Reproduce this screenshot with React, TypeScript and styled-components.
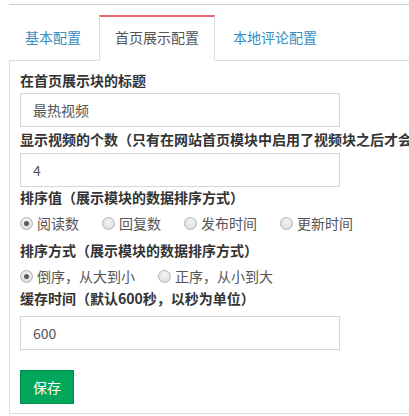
import { useState } from "react";
import styled, { createGlobalStyle } from "styled-components";

const GlobalStyle = createGlobalStyle`
  html, body {
    margin: 0;
    padding: 0;
    background: #fff;
    overflow: hidden;
  }
  body {
    font-family: "Noto Sans CJK SC", "Liberation Sans", sans-serif;
    font-size: 14px;
    color: #333;
  }
`;

const Wrapper = styled.div`
  margin: 4px 0 0 9px;
  padding-top: 10px;
  border-top: 1px solid #cccccc;
  width: 440px;
`;

const TabList = styled.ul`
  display: flex;
  margin: 0;
  padding: 0;
  list-style: none;
  border-bottom: 1px solid #dddddd;
`;

const Tab = styled.li<{ $active?: boolean }>`
  margin-right: 2px;
  margin-bottom: -1px;
  padding: 0 15px;
  height: 43px;
  line-height: 40px;
  border: 1px solid transparent;
  border-top: 2px solid transparent;
  color: #3c8dbc;
  cursor: pointer;
  white-space: nowrap;

  ${({ $active }) =>
    $active &&
    `
    color: #555;
    background: #fff;
    border-color: #dddddd;
    border-top-color: #e9686e;
    border-bottom-color: #fff;
  `}
`;

const Panel = styled.div`
  border-left: 1px solid #dddddd;
  border-bottom: 1px solid #dddddd;
  padding: 9px 10px 9px;
`;

const Label = styled.div<{ $mt?: number }>`
  margin-top: ${({ $mt }) => $mt ?? 0}px;
  line-height: 20px;
  font-weight: bold;
  color: #333;
  white-space: nowrap;
`;

const Input = styled.input<{ $mt?: number }>`
  display: block;
  box-sizing: border-box;
  margin-top: ${({ $mt }) => $mt ?? 0}px;
  width: 320px;
  height: 34px;
  padding: 0 12px;
  border: 1px solid #d2d6de;
  border-radius: 0;
  font-family: inherit;
  font-size: 14px;
  color: #555;
  outline: none;
`;

const RadioRow = styled.div<{ $mt?: number }>`
  display: flex;
  align-items: center;
  margin-top: ${({ $mt }) => $mt ?? 0}px;
  height: 20px;
`;

const RadioOption = styled.label`
  display: flex;
  align-items: center;
  gap: 4px;
  margin-right: 23px;
  color: #555;
  cursor: pointer;
  white-space: nowrap;
`;

const RadioDot = styled.span<{ $checked?: boolean }>`
  position: relative;
  display: inline-block;
  box-sizing: border-box;
  width: 13px;
  height: 13px;
  border-radius: 50%;
  border: 1px solid #b4b4b4;
  background: radial-gradient(circle at 50% 35%, #f4f4f4 0%, #d8d8d8 100%);

  &::after {
    content: "";
    display: ${({ $checked }) => ($checked ? "block" : "none")};
    position: absolute;
    left: 3px;
    top: 3px;
    width: 5px;
    height: 5px;
    border-radius: 50%;
    background: #5a5a5a;
  }
`;

const SaveButton = styled.button`
  display: block;
  margin-top: 20px;
  height: 34px;
  padding: 0 12px;
  border: 1px solid #008d4c;
  background: #00a65a;
  color: #fff;
  font-family: inherit;
  font-size: 14px;
  cursor: pointer;
`;

function RadioGroup({
  options,
  value,
  onChange,
  mt,
}: {
  options: string[];
  value: string;
  onChange: (v: string) => void;
  mt?: number;
}) {
  return (
    <RadioRow $mt={mt}>
      {options.map((opt) => (
        <RadioOption key={opt} onClick={() => onChange(opt)}>
          <RadioDot $checked={value === opt} />
          {opt}
        </RadioOption>
      ))}
    </RadioRow>
  );
}

export default function App() {
  const [tab, setTab] = useState("首页展示配置");
  const [title, setTitle] = useState("最热视频");
  const [count, setCount] = useState("4");
  const [sortBy, setSortBy] = useState("阅读数");
  const [order, setOrder] = useState("倒序，从大到小");
  const [cache, setCache] = useState("600");

  const tabs = ["基本配置", "首页展示配置", "本地评论配置"];

  return (
    <>
      <GlobalStyle />
      <Wrapper>
        <TabList>
          {tabs.map((t) => (
            <Tab key={t} $active={tab === t} onClick={() => setTab(t)}>
              {t}
            </Tab>
          ))}
        </TabList>
        <Panel>
          <Label>在首页展示块的标题</Label>
          <Input $mt={3} value={title} onChange={(e) => setTitle(e.target.value)} />

          <Label $mt={2}>
            显示视频的个数（只有在网站首页模块中启用了视频块之后才会生效）
          </Label>
          <Input $mt={4} value={count} onChange={(e) => setCount(e.target.value)} />

          <Label>排序值（展示模块的数据排序方式）</Label>
          <RadioGroup
            mt={6}
            options={["阅读数", "回复数", "发布时间", "更新时间"]}
            value={sortBy}
            onChange={setSortBy}
          />

          <Label $mt={7}>排序方式（展示模块的数据排序方式）</Label>
          <RadioGroup
            mt={6}
            options={["倒序，从大到小", "正序，从小到大"]}
            value={order}
            onChange={setOrder}
          />

          <Label $mt={2}>缓存时间（默认600秒，以秒为单位）</Label>
          <Input $mt={8} value={cache} onChange={(e) => setCache(e.target.value)} />

          <SaveButton>保存</SaveButton>
        </Panel>
      </Wrapper>
    </>
  );
}
